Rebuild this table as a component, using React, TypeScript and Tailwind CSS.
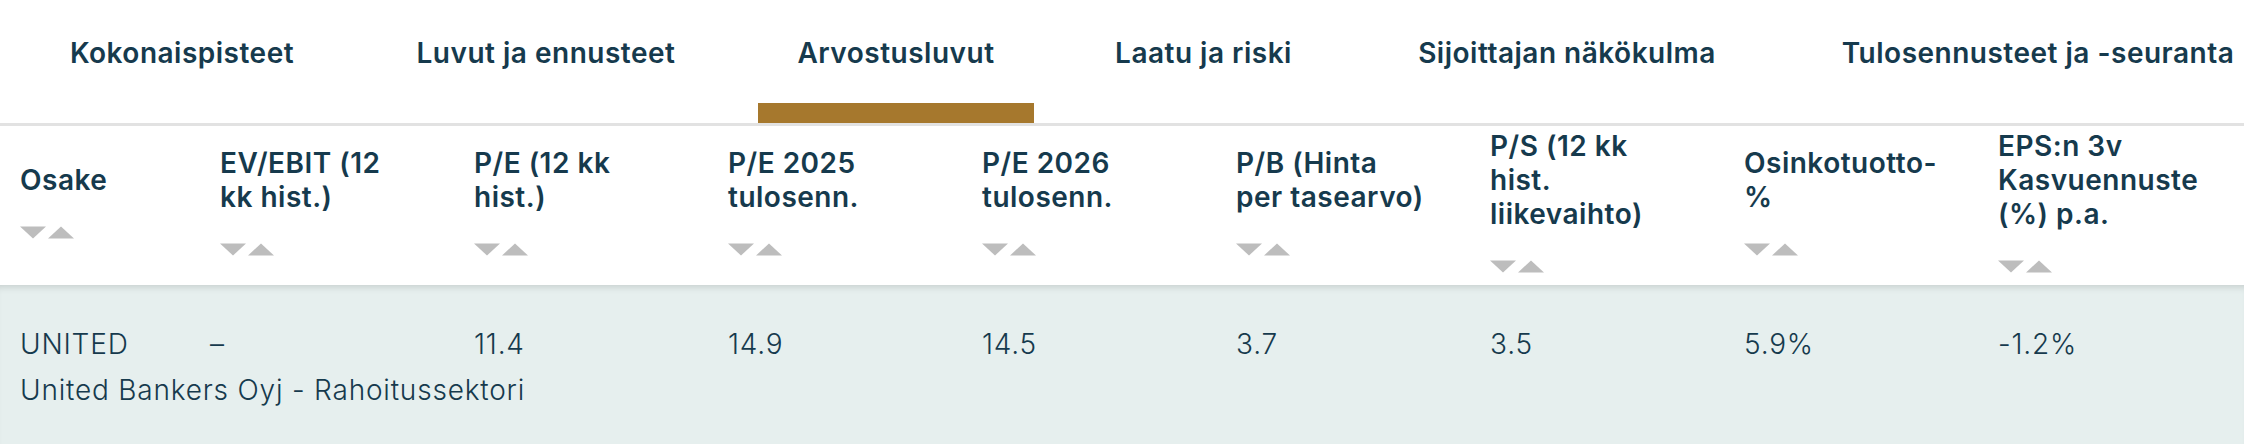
const tabs = [
  { label: 'Kokonaispisteet', w: 'w-[304px]', active: false },
  { label: 'Luvut ja ennusteet', w: 'w-[342px]', active: false },
  { label: 'Arvostusluvut', w: 'w-[276px]', active: true },
  { label: 'Laatu ja riski', w: 'w-[257px]', active: false },
  { label: 'Sijoittajan näkökulma', w: 'w-[388px]', active: false },
  { label: 'Tulosennusteet ja -seuranta', w: 'w-[472px]', active: false },
];

const cols = [
  { head: ['Osake'], value: 'UNITED' },
  { head: ['EV/EBIT (12', 'kk hist.)'], value: '–' },
  { head: ['P/E (12 kk', 'hist.)'], value: '11.4' },
  { head: ['P/E 2025', 'tulosenn.'], value: '14.9' },
  { head: ['P/E 2026', 'tulosenn.'], value: '14.5' },
  { head: ['P/B (Hinta', 'per tasearvo)'], value: '3.7' },
  { head: ['P/S (12 kk', 'hist.', 'liikevaihto)'], value: '3.5' },
  { head: ['Osinkotuotto-', '%'], value: '5.9%' },
  { head: ['EPS:n 3v', 'Kasvuennuste', '(%) p.a.'], value: '-1.2%' },
];

const font = 'font-["Inter","Liberation_Sans",sans-serif]';

function SortArrows() {
  return (
    <svg width="55" height="13" viewBox="0 0 55 13" className="mt-[29px] block">
      <polygon points="0,0.5 26,0.5 13,12.5" fill="#bdbdbd" />
      <polygon points="28,12.5 54,12.5 41,0.5" fill="#bdbdbd" />
    </svg>
  );
}

export default function App() {
  return (
    <div className={`h-[444px] w-[2244px] overflow-hidden bg-white text-[#163a4d] ${font}`}>
      <nav className="flex h-[126px] gap-[41px] overflow-hidden border-b-[3px] border-[#e2e2e2] pl-[30px]">
        {tabs.map((t) => (
          <div key={t.label} className={`flex shrink-0 flex-col justify-between ${t.w}`}>
            <span className="whitespace-nowrap pt-[36px] text-center text-[28px] font-semibold leading-[34px] tracking-[0.5px]">
              {t.label}
            </span>
            <div className={`h-[20px] ${t.active ? 'bg-[#a6782d]' : ''}`} />
          </div>
        ))}
      </nav>

      <div className="grid h-[159px] grid-cols-[200px_repeat(7,254px)_1fr] pb-[9px]">
        {cols.map((c) => (
          <div key={c.head.join(' ')} className="flex flex-col justify-center pl-[20px]">
            <div className="text-[28px] font-semibold leading-[34px] tracking-[0.5px]">
              {c.head.map((l) => (
                <div key={l} className="whitespace-nowrap">
                  {l}
                </div>
              ))}
            </div>
            <SortArrows />
          </div>
        ))}
      </div>

      <div className="grid h-[159px] grid-cols-[200px_repeat(7,254px)_1fr] bg-[#e6efee] pt-[42px] text-[28px] font-light leading-[34px] tracking-[0.8px] shadow-[inset_0_7px_7px_-5px_rgba(0,0,0,0.14)]">
        {cols.map((c, i) => (
          <div key={c.head.join(' ')} className="pl-[20px]">
            <div className={`whitespace-nowrap ${c.value === '–' ? '-ml-[10px]' : ''}`}>{c.value}</div>
            {i === 0 && (
              <div className="mt-[12px] whitespace-nowrap">United Bankers Oyj - Rahoitussektori</div>
            )}
          </div>
        ))}
      </div>
    </div>
  );
}
